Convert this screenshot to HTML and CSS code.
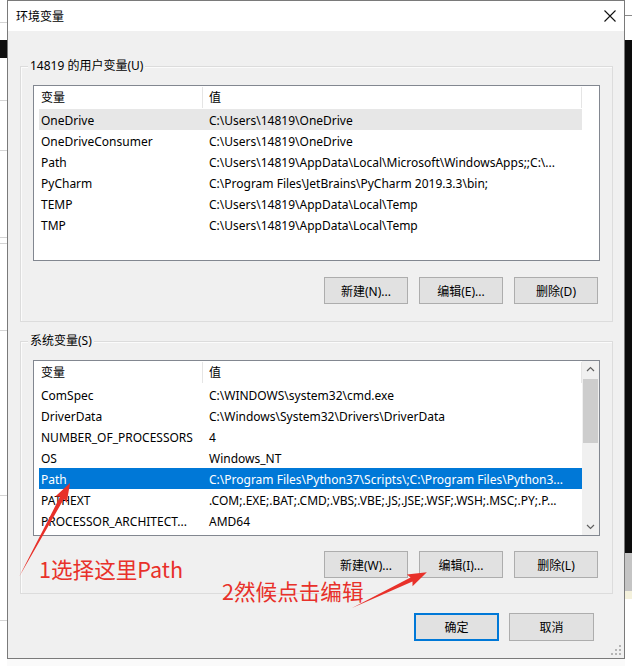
FILE: index.html
```html
<!DOCTYPE html>
<html lang="zh-CN">
<head>
<meta charset="utf-8">
<title>环境变量</title>
<link rel="stylesheet" href="styles.css">
</head>
<body>
<div class="desk">
  <div class="bg-left">
    <div class="bl-line l1"></div>
    <div class="bl-black"></div>
    <div class="bl-line l2"></div>
    <div class="bl-line l3"></div>
    <div class="bl-line l4"></div>
    <div class="bl-line l5"></div>
    <div class="bl-line l6"></div>
    <div class="bl-line l7"></div>
    <div class="bl-line l8"></div>
  </div>
  <div class="bg-right">
    <div class="br-line"></div>
    <div class="br-black"></div>
    <div class="br-gray"></div>
    <div class="br-light"></div>
  </div>

  <div class="dialog">
    <div class="titlebar">
      <span class="title">环境变量</span>
      <svg class="close" width="12" height="12" viewBox="0 0 12 12"><path d="M0.5 0.5 L11.5 11.5 M11.5 0.5 L0.5 11.5" stroke="#111" stroke-width="1.1" fill="none"/></svg>
    </div>
    <div class="body">
      <div class="group g1">
        <span class="group-label">14819 的用户变量(U)</span>
        <div class="list">
          <div class="list-main">
            <div class="row head"><span class="c1">变量</span><span class="c2">值</span></div>
            <div class="row hover"><span class="c1">OneDrive</span><span class="c2">C:\Users\14819\OneDrive</span></div>
            <div class="row"><span class="c1">OneDriveConsumer</span><span class="c2">C:\Users\14819\OneDrive</span></div>
            <div class="row"><span class="c1">Path</span><span class="c2">C:\Users\14819\AppData\Local\Microsoft\WindowsApps;;C:\...</span></div>
            <div class="row"><span class="c1">PyCharm</span><span class="c2">C:\Program Files\JetBrains\PyCharm 2019.3.3\bin;</span></div>
            <div class="row"><span class="c1">TEMP</span><span class="c2">C:\Users\14819\AppData\Local\Temp</span></div>
            <div class="row"><span class="c1">TMP</span><span class="c2">C:\Users\14819\AppData\Local\Temp</span></div>
          </div>
          <div class="no-scroll"></div>
        </div>
        <div class="btns">
          <button class="btn">新建(N)...</button>
          <button class="btn">编辑(E)...</button>
          <button class="btn">删除(D)</button>
        </div>
      </div>

      <div class="group g2">
        <span class="group-label">系统变量(S)</span>
        <div class="list">
          <div class="list-main">
            <div class="row head"><span class="c1">变量</span><span class="c2">值</span></div>
            <div class="row"><span class="c1">ComSpec</span><span class="c2">C:\WINDOWS\system32\cmd.exe</span></div>
            <div class="row"><span class="c1">DriverData</span><span class="c2">C:\Windows\System32\Drivers\DriverData</span></div>
            <div class="row"><span class="c1">NUMBER_OF_PROCESSORS</span><span class="c2">4</span></div>
            <div class="row"><span class="c1">OS</span><span class="c2">Windows_NT</span></div>
            <div class="row selected"><span class="c1">Path</span><span class="c2">C:\Program Files\Python37\Scripts\;C:\Program Files\Python3...</span></div>
            <div class="row"><span class="c1">PATHEXT</span><span class="c2">.COM;.EXE;.BAT;.CMD;.VBS;.VBE;.JS;.JSE;.WSF;.WSH;.MSC;.PY;.P...</span></div>
            <div class="row"><span class="c1">PROCESSOR_ARCHITECT...</span><span class="c2">AMD64</span></div>
          </div>
          <div class="scrollbar">
            <svg class="sb-arrow" width="17" height="17" viewBox="0 0 17 17"><polyline points="5,10 8.5,6.5 12,10" stroke="#606060" stroke-width="1.2" fill="none"/></svg>
            <div class="sb-track"><div class="sb-thumb"></div></div>
            <svg class="sb-arrow" width="17" height="17" viewBox="0 0 17 17"><polyline points="5,7 8.5,10.5 12,7" stroke="#606060" stroke-width="1.2" fill="none"/></svg>
          </div>
        </div>
        <div class="btns">
          <button class="btn">新建(W)...</button>
          <button class="btn">编辑(I)...</button>
          <button class="btn">删除(L)</button>
        </div>
      </div>

      <div class="footer">
        <button class="btn btn-default">确定</button>
        <button class="btn">取消</button>
      </div>
      <svg class="grip" width="10" height="10" viewBox="0 0 10 10">
        <rect x="8" y="0" width="2" height="2" fill="#b5b5b5"/>
        <rect x="4" y="4" width="2" height="2" fill="#b5b5b5"/>
        <rect x="8" y="4" width="2" height="2" fill="#b5b5b5"/>
        <rect x="0" y="8" width="2" height="2" fill="#b5b5b5"/>
        <rect x="4" y="8" width="2" height="2" fill="#b5b5b5"/>
        <rect x="8" y="8" width="2" height="2" fill="#b5b5b5"/>
      </svg>
    </div>
  </div>

  <svg class="arrows" width="632" height="666" viewBox="0 0 632 666">
    <g transform="translate(19 577) rotate(-61.5)">
      <polygon points="0,0 90,-2.2 88,-6.5 107,0 88,6.5 90,2.2" fill="#e8312a"/>
    </g>
    <g transform="translate(352 608) rotate(-25.6)">
      <polygon points="0,0 66,-2.2 64,-6.5 83,0 64,6.5 66,2.2" fill="#e8312a"/>
    </g>
  </svg>
  <div class="note n1">1选择这里Path</div>
  <div class="note n2">2然候点击编辑</div>
</div>
</body>
</html>
```

FILE: styles.css
```css
html, body {
  margin: 0;
  padding: 0;
}
body {
  width: 632px;
  height: 666px;
  overflow: hidden;
  background: #ffffff;
  font-family: "Noto Sans", "Noto Sans CJK SC", sans-serif;
  font-size: 12px;
  color: #000;
}
.desk {
  position: relative;
  width: 632px;
  height: 666px;
  background: #fafafa;
}

/* background windows peeking out */
.bg-left {
  position: absolute;
  left: 0;
  top: 0;
  width: 7px;
  height: 666px;
  background: #ffffff;
}
.bl-line {
  position: absolute;
  left: 0;
  width: 7px;
  height: 1px;
  background: #d4d4d4;
}
.l1 { top: 22px; }
.l2 { top: 100px; }
.l3 { top: 150px; }
.l4 { top: 237px; }
.l5 { top: 243px; }
.l6 { top: 330px; }
.l7 { top: 495px; }
.l8 { top: 620px; }
.bl-black {
  position: absolute;
  left: 0;
  top: 40px;
  width: 7px;
  height: 18px;
  background: #101010;
}
.bg-right {
  position: absolute;
  left: 625px;
  top: 0;
  width: 7px;
  height: 666px;
  background: #ffffff;
}
.br-line {
  position: absolute;
  top: 15px;
  left: 0;
  width: 7px;
  height: 1px;
  background: #8a8a8a;
}
.br-black {
  position: absolute;
  top: 40px;
  left: 0;
  width: 7px;
  height: 513px;
  background: #0c0c0c;
}
.br-gray {
  position: absolute;
  top: 553px;
  left: 0;
  width: 7px;
  height: 38px;
  background: #c4c4c4;
}
.br-light {
  position: absolute;
  top: 591px;
  left: 0;
  width: 7px;
  height: 8px;
  background: #f4f1dc;
}

/* dialog window */
.dialog {
  position: absolute;
  left: 7px;
  top: 0;
  width: 618px;
  height: 659px;
  box-sizing: border-box;
  border: 1px solid #7a7a7a;
  background: #f0f0f0;
  display: flex;
  flex-direction: column;
}
.titlebar {
  height: 30px;
  background: #ffffff;
  display: flex;
  align-items: center;
  justify-content: space-between;
  padding: 0 8px 0 8px;
  flex: none;
}
.title {
  font-size: 12px;
  color: #000;
}
.close {
  display: block;
}
.body {
  position: relative;
  flex: 1;
  padding: 35px 11px 0 12px;
}

.group {
  position: relative;
  border: 1px solid #dcdcdc;
  box-shadow: inset 1px 1px 0 #fbfbfb;
  padding: 18px 12px 17px 12px;
}
.g2 {
  margin-top: 19px;
  padding-bottom: 15px;
}
.group-label {
  position: absolute;
  top: -9px;
  left: 7px;
  padding: 0 2px;
  background: #f0f0f0;
  line-height: 16px;
}

.list {
  height: 176px;
  box-sizing: border-box;
  border: 1px solid #828790;
  background: #ffffff;
  display: flex;
  padding-left: 5px;
}
.list-main {
  flex: 1;
  display: flex;
  flex-direction: column;
}
.no-scroll {
  width: 17px;
  flex: none;
}
.row {
  display: flex;
  height: 21px;
  box-sizing: border-box;
  padding-top: 1px;
  align-items: center;
  white-space: nowrap;
}
.row.head {
  height: 23px;
  padding-top: 0;
}
.c1 {
  width: 164px;
  flex: none;
  box-sizing: border-box;
  padding-left: 2px;
  overflow: hidden;
}
.c2 {
  flex: 1;
  padding-left: 6px;
  overflow: hidden;
}
.row.head .c1,
.row.head .c2 {
  border-right: 1px solid #e5e5e5;
  height: 21px;
  line-height: 21px;
}
.row.hover {
  background: #e7e7e7;
}
.row.selected {
  background: #0078d7;
  color: #ffffff;
}

.scrollbar {
  width: 17px;
  flex: none;
  background: #f0f0f0;
  display: flex;
  flex-direction: column;
}
.sb-arrow {
  display: block;
  flex: none;
}
.sb-track {
  flex: 1;
  padding: 1px 1px 0 1px;
}
.sb-thumb {
  height: 64px;
  background: #cdcdcd;
}

.btns {
  display: flex;
  justify-content: flex-end;
  gap: 11px;
  margin-top: 16px;
  padding-right: 2px;
}
.g2 .btns {
  margin-top: 15px;
}
.btn {
  width: 84px;
  height: 27px;
  box-sizing: border-box;
  border: 1px solid #adadad;
  background: #e1e1e1;
  font-family: "Noto Sans", "Noto Sans CJK SC", sans-serif;
  font-size: 12px;
  color: #000;
  padding: 0;
  margin: 0;
}
.footer {
  display: flex;
  justify-content: flex-end;
  gap: 10px;
  margin-top: 19px;
  padding-right: 19px;
}
.footer .btn {
  width: 85px;
  height: 28px;
}
.btn-default {
  border: 2px solid #0078d7;
}
.grip {
  position: absolute;
  right: 3px;
  bottom: 3px;
}

/* annotations */
.arrows {
  position: absolute;
  left: 0;
  top: 0;
  pointer-events: none;
}
.note {
  position: absolute;
  font-family: "Noto Sans CJK SC", "Noto Sans", sans-serif;
  font-size: 21.6px;
  line-height: 24px;
  color: #e8312a;
  white-space: nowrap;
}
.n1 {
  left: 39px;
  top: 557px;
}
.n2 {
  left: 222px;
  top: 579px;
}
```
